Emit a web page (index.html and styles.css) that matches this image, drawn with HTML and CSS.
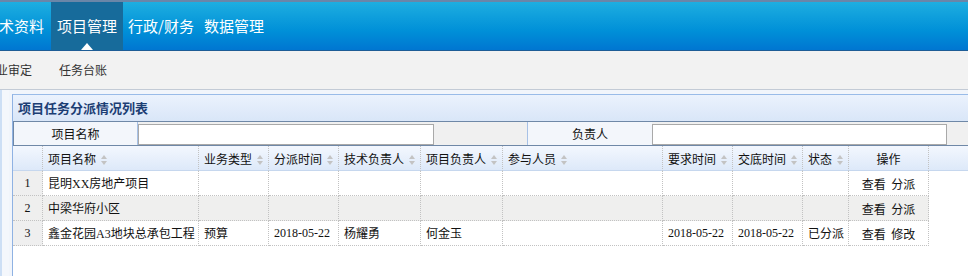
FILE: index.html
```html
<!DOCTYPE html>
<html lang="zh-CN">
<head>
  <meta charset="UTF-8">
  <title>项目任务分派情况列表</title>
  <link rel="stylesheet" href="styles.css">
</head>
<body>
  <div class="topbar">
    <ul class="nav">
      <li>技术资料</li>
      <li class="active">项目管理</li>
      <li>行政/财务</li>
      <li>数据管理</li>
    </ul>
  </div>

  <div class="subnav">
    <span>专业审定</span>
    <span>任务台账</span>
  </div>

  <div class="main">
    <div class="side"></div>
    <div class="panel">
      <div class="panel-title">项目任务分派情况列表</div>

      <div class="search">
        <label class="s-label">项目名称</label>
        <div class="s-field first"><input type="text"></div>
        <label class="s-label second">负责人</label>
        <div class="s-field"><input type="text"></div>
      </div>

      <table class="grid">
        <thead>
          <tr>
            <th class="c-rn"></th>
            <th class="c-name">项目名称<span class="sort"></span></th>
            <th class="c-type">业务类型<span class="sort"></span></th>
            <th class="c-date">分派时间<span class="sort"></span></th>
            <th class="c-person">技术负责人<span class="sort"></span></th>
            <th class="c-person">项目负责人<span class="sort"></span></th>
            <th class="c-members">参与人员<span class="sort"></span></th>
            <th class="c-date">要求时间<span class="sort"></span></th>
            <th class="c-date">交底时间<span class="sort"></span></th>
            <th class="c-state">状态<span class="sort"></span></th>
            <th class="c-ops">操作</th>
            <th class="c-fill"></th>
          </tr>
        </thead>
        <tbody>
          <tr>
            <td class="rn">1</td>
            <td>昆明XX房地产项目</td>
            <td></td><td></td><td></td><td></td><td></td><td></td><td></td><td></td>
            <td class="ops">查看&nbsp;&nbsp;分派</td>
            <td class="fill"></td>
          </tr>
          <tr class="alt">
            <td class="rn">2</td>
            <td>中梁华府小区</td>
            <td></td><td></td><td></td><td></td><td></td><td></td><td></td><td></td>
            <td class="ops">查看&nbsp;&nbsp;分派</td>
            <td class="fill"></td>
          </tr>
          <tr>
            <td class="rn">3</td>
            <td>鑫金花园A3地块总承包工程</td>
            <td>预算</td>
            <td>2018-05-22</td>
            <td>杨耀勇</td>
            <td>何金玉</td>
            <td></td>
            <td>2018-05-22</td>
            <td>2018-05-22</td>
            <td>已分派</td>
            <td class="ops">查看&nbsp;&nbsp;修改</td>
            <td class="fill"></td>
          </tr>
        </tbody>
      </table>
    </div>
  </div>
</body>
</html>
```

FILE: styles.css
```css
body {
  margin: 0;
  font-family: "Noto Sans CJK SC", sans-serif;
  background: #fff;
  overflow: hidden;
}

/* 顶部导航 */
.topbar {
  height: 48px;
  border-top: 2px solid #6a86a8;
  border-bottom: 1px solid #1e5d96;
  background: linear-gradient(#1eaee0, #0090d8 60%, #0076d1);
}

.nav {
  list-style: none;
  margin: 0 0 0 -21px;
  padding: 0;
  display: flex;
  white-space: nowrap;
}

.nav li {
  position: relative;
  padding: 0 5px;
  line-height: 48px;
  font-size: 15px;
  color: #fff;
}

.nav li.active {
  margin-left: 2px;
  padding: 0 6px;
  background: #176b9b;
}

.nav li.active::after {
  content: "";
  position: absolute;
  left: 50%;
  bottom: 0;
  margin-left: -6px;
  border-left: 6px solid transparent;
  border-right: 6px solid transparent;
  border-bottom: 7px solid #fff;
}

/* 二级菜单 */
.subnav {
  height: 38px;
  margin-left: -16px;
  display: flex;
  gap: 27px;
  background: #f2f2f2;
  border-bottom: 1px solid #c3cbd6;
  font-size: 12px;
  line-height: 38px;
  color: #333;
  white-space: nowrap;
}

/* 主体 */
.main {
  display: flex;
  height: 186px;
  padding-top: 4px;
  box-sizing: border-box;
  background: #f1f5fb;
}

.side {
  width: 9px;
  margin-top: -4px;
  border-left: 2px solid #cddff5;
  background: #f4f7fc;
  box-sizing: border-box;
}

.panel {
  flex: 1;
  margin-left: 3px;
  border-left: 1px solid #8fb2e3;
  border-top: 1px solid #99bbe8;
  background: #fff;
}

.panel-title {
  height: 26px;
  padding-left: 5px;
  line-height: 26px;
  font-size: 13px;
  font-weight: bold;
  color: #1c3e74;
  background: linear-gradient(#ebf2fd, #d9e6f8);
}

/* 查询条件 */
.search {
  display: flex;
  height: 23px;
  border-top: 1px solid #6f88a7;
  border-bottom: 1px solid #6f88a7;
  border-left: 1px solid #6f88a7;
  background: #f0f0f0;
}

.s-label {
  width: 123px;
  border-right: 1px solid #a7c1e6;
  background: #f3f6fb;
  font-size: 12px;
  line-height: 23px;
  text-align: center;
  color: #111;
}

.s-label.second {
  width: 124px;
  border-right: none;
  border-left: 1px solid #a7c1e6;
}

.s-field {
  padding-top: 2px;
}

.s-field.first {
  width: 389px;
}

.s-field input {
  display: block;
  width: 295px;
  height: 21px;
  margin: 0;
  padding: 0 3px;
  border: 1px solid #a9a9a9;
  box-sizing: border-box;
  background: #fff;
}

.s-field.first input {
  width: 296px;
}

/* 列表 */
.grid {
  width: 100%;
  table-layout: fixed;
  border-collapse: separate;
  border-spacing: 0;
  font-family: "Liberation Serif", "Noto Sans CJK SC", serif;
  font-size: 12px;
  color: #111;
}

.grid th,
.grid td {
  box-sizing: border-box;
  padding: 0 5px;
  border-right: 1px dotted #c2c2c2;
  white-space: nowrap;
  overflow: hidden;
  text-align: left;
}

.grid th {
  height: 25px;
  font-family: "Noto Sans CJK SC", sans-serif;
  font-weight: normal;
  border-bottom: 1px solid #c6d7ee;
  background: linear-gradient(#f3f7fe, #dde9f9);
}

.grid td {
  height: 25px;
  border-bottom: 1px dotted #c2c2c2;
}

.grid .c-rn { width: 30px; }
.grid .c-name { width: 156px; }
.grid .c-type { width: 70px; }
.grid .c-date { width: 70px; }
.grid .c-person { width: 82px; }
.grid .c-members { width: 160px; }
.grid .c-state { width: 46px; }
.grid .c-ops { width: 80px; text-align: center; }

.grid th.c-fill,
.grid td.fill {
  border-right: none;
}

.grid td.fill {
  border-bottom: none;
  background: #fff;
}

.grid td.rn {
  padding: 0;
  text-align: center;
  background: #efefef;
}

.grid td.ops {
  text-align: center;
  font-family: "Noto Sans CJK SC", sans-serif;
}

.grid tr.alt td {
  background: #efefee;
}

.grid tr.alt td.fill {
  background: #fff;
}

.sort {
  display: inline-block;
  position: relative;
  width: 7px;
  height: 10px;
  margin-left: 5px;
  vertical-align: -1px;
}

.sort::before,
.sort::after {
  content: "";
  position: absolute;
  left: 0;
  border-left: 3.5px solid transparent;
  border-right: 3.5px solid transparent;
}

.sort::before {
  top: 0;
  border-bottom: 4px solid #c3c3c3;
}

.sort::after {
  bottom: 0;
  border-top: 4px solid #c3c3c3;
}
```
